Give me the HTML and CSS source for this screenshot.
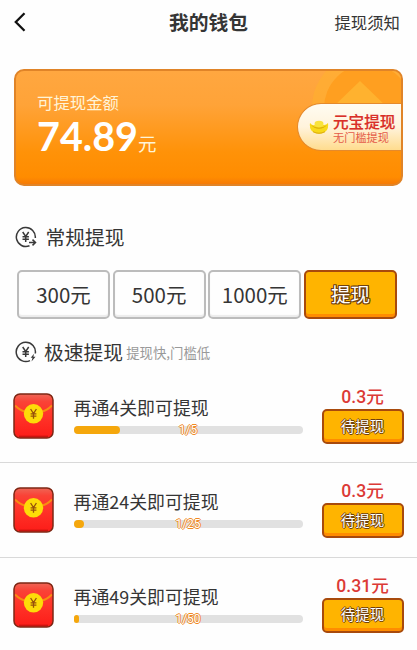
FILE: index.html
```html
<!DOCTYPE html>
<html lang="zh-CN">
<head>
<meta charset="utf-8">
<title>我的钱包</title>
<link rel="stylesheet" href="styles.css">
</head>
<body>
<svg class="defs" width="0" height="0" aria-hidden="true">
  <defs>
    <linearGradient id="red" x1="0" y1="0" x2="0" y2="1">
      <stop offset="0" stop-color="#ff4a3c"/><stop offset=".5" stop-color="#ff3429"/><stop offset="1" stop-color="#fc1c18"/>
    </linearGradient>
    <linearGradient id="flap" x1="0" y1="0" x2="0" y2="1">
      <stop offset="0" stop-color="#ee6656"/><stop offset=".35" stop-color="#fa4236"/><stop offset="1" stop-color="#ff3026"/>
    </linearGradient>
    <symbol id="packet" viewBox="0 0 41 46">
      <rect x="1" y="1" width="39" height="44" rx="6" fill="url(#red)"/>
      <path d="M1 12V7Q1 1 7 1H34Q40 1 40 7V12L20.500 23Z" fill="url(#flap)"/>
      <path d="M2 12.500Q7 17.500 13 19M28 19Q34 17.500 39 12.500" fill="none" stroke="#f98c12" stroke-width="2"/>
      <rect x="1" y="1" width="39" height="44" rx="6" fill="none" stroke="#7d2714" stroke-width="1.500"/>
      <path d="M6 43.300H35" stroke="#c81510" stroke-width="1.300"/>
      <circle cx="20.500" cy="20.800" r="9.700" fill="#fddc08"/>
      <path d="M17.600 16L20.500 20.500L23.400 16M20.500 20.500V25.700M17.600 20.800H23.400M17.600 23.200H23.400" fill="none" stroke="#96500c" stroke-width="1.300"/>
    </symbol>
  </defs>
</svg>
<header class="topbar">
  <svg class="back" width="12" height="20" viewBox="0 0 12 20"><path d="M10.500 1.300L1.800 10L10.500 18.700" fill="none" stroke="#111" stroke-width="2.300"/></svg>
  <h1>我的钱包</h1>
  <span class="notice">提现须知</span>
</header>

<section class="balance">
  <svg class="coin" width="110" height="60" viewBox="0 0 110 60">
    <circle cx="76" cy="37" r="56" fill="#ffb02e" opacity=".6"/>
    <circle cx="76" cy="37" r="44" fill="#ff9f20"/>
    <path d="M68 10L96 37V60H40V37Z" fill="#ffb22f"/>
  </svg>
  <p class="label">可提现金额</p>
  <p class="sum"><b>74.89</b><span>元</span></p>
  <div class="yuanbao">
    <svg width="20" height="16" viewBox="0 0 20 16">
      <path d="M1 4Q3.500 7 6 6Q10 -1 14 6Q17 6.500 19 4Q20 11 15 13.500Q10 16 5 13.500Q0 11 1 4Z" fill="#f8d91a"/>
      <ellipse cx="10" cy="5" rx="4.500" ry="3.300" fill="#f9e33c"/>
      <path d="M2 6Q10 11.500 18 6Q15 9.700 10 9.700Q5 9.700 2 6Z" fill="#d9ac0b"/>
      <path d="M4 12.700Q10 15.800 16 12.700" stroke="#dcaa10" fill="none"/>
    </svg>
    <div class="offer"><strong>元宝提现</strong><small>无门槛提现</small></div>
  </div>
</section>

<h2 class="heading regular">
  <svg width="22" height="22" viewBox="0 0 22 22" fill="none" stroke="#393939" stroke-width="1.500">
    <path d="M20.300 12A9.500 9.500 0 1 0 14.500 19.800"/>
    <path d="M7.700 6L10.700 10.500L13.700 6M10.700 10.500V16M7.500 10.700H13.900M7.500 13.300H13.900"/>
    <path d="M14 16.500H20M17.500 13.600L20.500 16.500L17.500 19.400"/>
  </svg>
  <span>常规提现</span>
</h2>
<div class="amounts">
  <button class="choice">300元</button>
  <button class="choice">500元</button>
  <button class="choice">1000元</button>
  <button class="gold">提现</button>
</div>
<h2 class="heading fast">
  <svg width="22" height="22" viewBox="0 0 22 22" fill="none" stroke="#393939" stroke-width="1.500">
    <path d="M20.300 12.500A9.600 9.600 0 1 0 15 19.600"/>
    <path d="M7.700 6L10.700 10.500L13.700 6M10.700 10.500V16M7.500 10.700H13.900M7.500 13.300H13.900"/>
    <path d="M19 12.800L15.700 16.800H17.500L16.500 20.500L20.500 15.800H18.400Z" fill="#393939" stroke="none"/>
  </svg>
  <span>极速提现</span><small>提现快,门槛低</small>
</h2>

<ul class="tasks">
  <li>
    <svg class="packet" width="41" height="46"><use href="#packet"/></svg>
    <div class="task"><p>再通4关即可提现</p><div class="bar"><i style="width:46px"></i><em>1/5</em></div></div>
    <div class="reward"><b>0.3元</b><button class="gold">待提现</button></div>
  </li>
  <li>
    <svg class="packet" width="41" height="46"><use href="#packet"/></svg>
    <div class="task"><p>再通24关即可提现</p><div class="bar"><i style="width:10px"></i><em>1/25</em></div></div>
    <div class="reward"><b>0.3元</b><button class="gold">待提现</button></div>
  </li>
  <li>
    <svg class="packet" width="41" height="46"><use href="#packet"/></svg>
    <div class="task"><p>再通49关即可提现</p><div class="bar"><i style="width:5px"></i><em>1/50</em></div></div>
    <div class="reward"><b>0.31元</b><button class="gold">待提现</button></div>
  </li>
</ul>
</body>
</html>
```
FILE: styles.css
```css
* { box-sizing: border-box; margin: 0; padding: 0; }
body {
  width: 417px;
  height: 650px;
  overflow: hidden;
  background: #fefefe;
  color: #353535;
  font-family: "Noto Sans CJK SC", sans-serif;
}
.defs { position: absolute; }
button { font-family: inherit; }

.topbar {
  display: grid;
  grid-template-columns: 1fr auto 1fr;
  align-items: center;
  height: 43px;
  padding: 0 17px 0 14px;
}
.topbar h1 { font-size: 19.800px; line-height: 28px; font-weight: 700; padding-left: 3px; }
.notice { justify-self: end; font-size: 16.400px; line-height: 24px; }

.balance {
  position: relative;
  width: 389px;
  height: 117px;
  margin: 26px 0 0 14px;
  padding: 19px 0 0 21px;
  border: 2px solid #e08428;
  border-radius: 10px;
  overflow: hidden;
  color: #fff;
  background: linear-gradient(#ffa740 0%, #ffa338 30%, #ff9208 72%, #ff8c00 94%, #f67b05 100%);
}
.coin { position: absolute; right: -1px; top: 0; }
.label { font-size: 16.400px; line-height: 24px; color: #fff4d8; }
.sum { display: flex; align-items: baseline; line-height: 40px; margin-top: 2px; }
.sum b { font: 700 39.500px/40px Lato, sans-serif; }
.sum span { font-size: 18.500px; line-height: 20px; color: #fff4d8; }
.yuanbao {
  position: absolute;
  right: 0;
  top: 32px;
  display: flex;
  align-items: center;
  gap: 4px;
  width: 104px;
  height: 48px;
  padding-left: 11px;
  border: 1.500px solid #e58a2c;
  border-right: 0;
  border-radius: 24px 0 0 24px;
  background: linear-gradient(#fffcf2, #fff3dc 50%, #ffdc8e);
}
.offer { display: flex; flex-direction: column; padding-top: 2px; }
.yuanbao strong { font-size: 15.600px; line-height: 18px; font-weight: 500; color: #d92f27; white-space: nowrap; -webkit-text-stroke: .2px #d92f27; }
.yuanbao small { font-size: 11.200px; line-height: 15px; color: #e45a48; white-space: nowrap; }

.heading { display: flex; align-items: center; font-size: 19.800px; line-height: 30px; height: 30px; font-weight: 400; padding-left: 15px; }
.heading small { font-size: 13.400px; color: #999; margin-left: 3px; }
.regular { margin-top: 36px; }
.regular span { margin-left: 8.500px; }
.fast { margin-top: 18px; }
.fast span { margin-left: 7px; }

.amounts { display: grid; grid-template-columns: repeat(4, 93px); gap: 2.700px; margin: 18px 0 0 17px; height: 49px; }
.choice {
  padding-bottom: 2px;
  border: 2px solid #bcbcbc;
  border-radius: 5px;
  background: #fefefe;
  box-shadow: inset 0 -2px 1px #ececec;
  color: #353535;
  font-size: 20.500px;
  line-height: 30px;
  white-space: nowrap;
}
.gold {
  padding-bottom: 2px;
  border: 2px solid #a84a0c;
  border-radius: 5px;
  background: #ffb400;
  box-shadow: inset 0 -3px 0 #ff8c00;
  color: #fff;
  font-size: 19.600px;
  line-height: 28px;
  text-shadow: 1px 0 #70400e, -1px 0 #70400e, 0 1px #70400e, 0 -1px #70400e, 1px 1px #70400e, -1px 1px #70400e, 1px -1px #70400e, -1px -1px #70400e;
}

.tasks { list-style: none; margin-top: 2px; }
.tasks li { display: flex; height: 94.300px; padding: 0 13.500px; border-bottom: 1px solid #d9d9d9; }
.tasks li:last-child { border-bottom: 0; }
.packet { margin: 24px 0 0 -.5px; flex: none; }
.task { width: 229px; margin: 25px 0 0 19.500px; }
.task p { font-size: 17.900px; line-height: 26px; white-space: nowrap; }
.bar { position: relative; height: 8px; margin-top: 6px; border-radius: 5px; background: #e1e1e1; }
.bar i { display: block; height: 100%; border-radius: 5px; background: #f5a70c; }
.bar em {
  position: absolute;
  inset: -4px 0 auto;
  text-align: center;
  font: 400 12px/17px Roboto, sans-serif;
  color: #fff;
  text-shadow: 1px 0 #f08a24, -1px 0 #f08a24, 0 1px #f08a24, 0 -1px #f08a24;
}
.reward { display: flex; flex-direction: column; align-items: center; width: 82px; margin: 18px 0 0 auto; }
.reward b { font: 500 17.600px/20px Roboto, "Noto Sans CJK SC", sans-serif; color: #dc3a36; }
.reward .gold { width: 82px; height: 35px; margin-top: 2px; font-size: 14.500px; line-height: 22px; text-shadow: 1px 0 #70400e, -1px 0 #70400e, 0 1px #70400e, 0 -1px #70400e; }
```
